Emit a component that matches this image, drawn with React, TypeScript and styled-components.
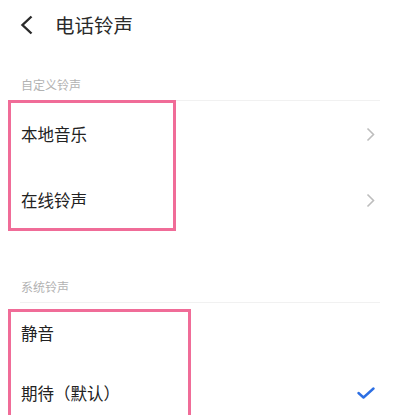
import styled, { createGlobalStyle } from 'styled-components';

const GlobalStyle = createGlobalStyle`
  html, body {
    margin: 0;
    padding: 0;
    background: #ffffff;
  }
  body {
    font-family: "Noto Sans CJK SC", "Noto Sans", sans-serif;
    color: #222222;
    overflow: hidden;
  }
`;

const Page = styled.div`
  width: 400px;
  height: 415px;
  overflow: hidden;
`;

const Header = styled.div`
  display: flex;
  align-items: center;
  height: 50px;
  padding-left: 20px;
  gap: 21px;
`;

const BackButton = styled.div`
  display: flex;
  align-items: center;
  width: 14px;
  height: 20px;
`;

const Title = styled.div`
  font-size: 19.5px;
  line-height: 24px;
  color: #2a2a2a;
`;

const Section = styled.div<{ $gap: number }>`
  margin-top: ${(p) => p.$gap}px;
`;

const SectionLabel = styled.div`
  margin: 0 20px;
  padding: 0 1px 7px;
  font-size: 12px;
  line-height: 16px;
  color: #b2b2b2;
  border-bottom: 1px solid #f1f1f1;
`;

const RowList = styled.div`
  position: relative;
`;

const Row = styled.div<{ $height: number }>`
  display: flex;
  align-items: center;
  justify-content: space-between;
  height: ${(p) => p.$height}px;
  padding: 0 25px 0 21px;
  font-size: 16.5px;
  color: #222222;
`;

const Highlight = styled.div<{ $top: number; $width: number; $height: number }>`
  position: absolute;
  left: 8px;
  top: ${(p) => p.$top}px;
  width: ${(p) => p.$width}px;
  height: ${(p) => p.$height}px;
  box-sizing: border-box;
  border: 3px solid #f06c98;
  pointer-events: none;
`;

function Chevron() {
  return (
    <svg width="9" height="15" viewBox="0 0 9 15">
      <path d="M1.5 1.5 L7.5 7.5 L1.5 13.5" fill="none" stroke="#bdbdbd" strokeWidth="1.6" />
    </svg>
  );
}

function Check() {
  return (
    <svg width="18" height="12" viewBox="0 0 18 12">
      <path d="M1.5 6 L6.5 10.5 L16.5 1.5" fill="none" stroke="#2d6fe3" strokeWidth="2.4" strokeLinecap="round" strokeLinejoin="round" />
    </svg>
  );
}

export default function App() {
  return (
    <Page>
      <GlobalStyle />
      <Header>
        <BackButton>
          <svg width="14" height="20" viewBox="0 0 14 20">
            <path d="M11.5 1.5 L2.5 10 L11.5 18.5" fill="none" stroke="#2a2a2a" strokeWidth="2.4" strokeLinejoin="miter" />
          </svg>
        </BackButton>
        <Title>电话铃声</Title>
      </Header>

      <Section $gap={27}>
        <SectionLabel>自定义铃声</SectionLabel>
        <RowList>
          <Row $height={66}>
            <span>本地音乐</span>
            <Chevron />
          </Row>
          <Row $height={66}>
            <span>在线铃声</span>
            <Chevron />
          </Row>
          <Highlight $top={-1} $width={168} $height={131} />
        </RowList>
      </Section>

      <Section $gap={46}>
        <SectionLabel>系统铃声</SectionLabel>
        <RowList>
          <Row $height={60}>
            <span>静音</span>
          </Row>
          <Row $height={60}>
            <span>期待（默认）</span>
            <Check />
          </Row>
          <Highlight $top={6} $width={183} $height={140} />
        </RowList>
      </Section>
    </Page>
  );
}
